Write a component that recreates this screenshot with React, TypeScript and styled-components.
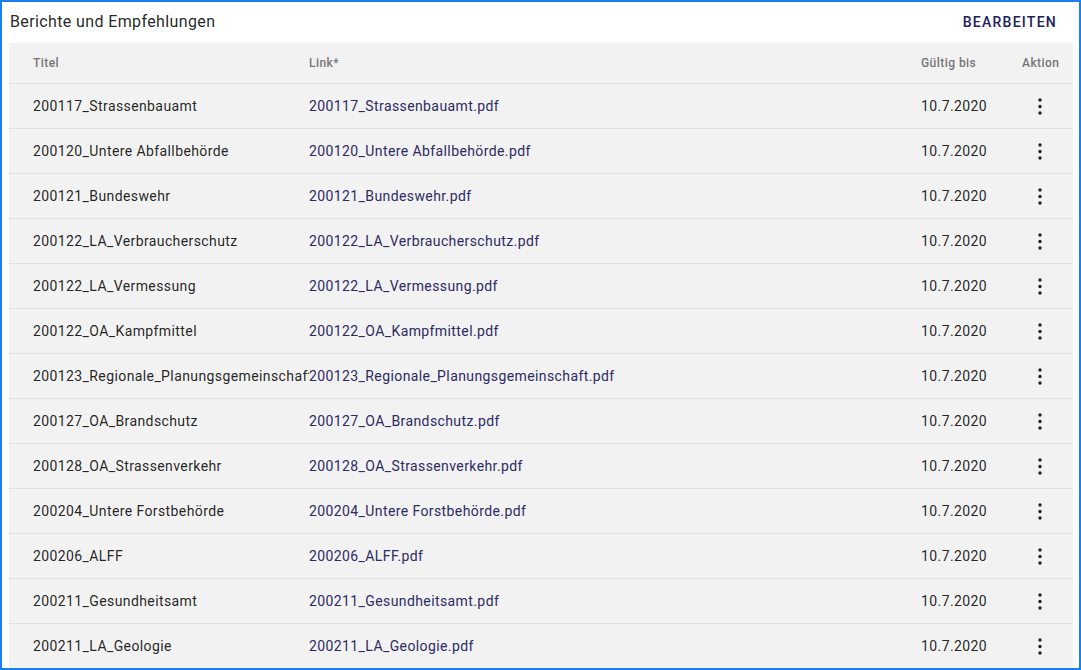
import React, { FC } from 'react'
import styled, { createGlobalStyle } from 'styled-components'

const GlobalStyle = createGlobalStyle`
    html, body {
        margin: 0;
        padding: 0;
        background: #ffffff;
        font-family: Roboto, "Liberation Sans", Arial, sans-serif;
    }
`

interface IReport {
	title: string
	file: string
	validUntil: string
}

const reports: IReport[] = [
	{ title: '200117_Strassenbauamt', file: '200117_Strassenbauamt.pdf', validUntil: '10.7.2020' },
	{ title: '200120_Untere Abfallbehörde', file: '200120_Untere Abfallbehörde.pdf', validUntil: '10.7.2020' },
	{ title: '200121_Bundeswehr', file: '200121_Bundeswehr.pdf', validUntil: '10.7.2020' },
	{ title: '200122_LA_Verbraucherschutz', file: '200122_LA_Verbraucherschutz.pdf', validUntil: '10.7.2020' },
	{ title: '200122_LA_Vermessung', file: '200122_LA_Vermessung.pdf', validUntil: '10.7.2020' },
	{ title: '200122_OA_Kampfmittel', file: '200122_OA_Kampfmittel.pdf', validUntil: '10.7.2020' },
	{ title: '200123_Regionale_Planungsgemeinschaft', file: '200123_Regionale_Planungsgemeinschaft.pdf', validUntil: '10.7.2020' },
	{ title: '200127_OA_Brandschutz', file: '200127_OA_Brandschutz.pdf', validUntil: '10.7.2020' },
	{ title: '200128_OA_Strassenverkehr', file: '200128_OA_Strassenverkehr.pdf', validUntil: '10.7.2020' },
	{ title: '200204_Untere Forstbehörde', file: '200204_Untere Forstbehörde.pdf', validUntil: '10.7.2020' },
	{ title: '200206_ALFF', file: '200206_ALFF.pdf', validUntil: '10.7.2020' },
	{ title: '200211_Gesundheitsamt', file: '200211_Gesundheitsamt.pdf', validUntil: '10.7.2020' },
	{ title: '200211_LA_Geologie', file: '200211_LA_Geologie.pdf', validUntil: '10.7.2020' },
]

const MoreIcon: FC = () => (
	<svg width='24' height='24' viewBox='0 0 24 24' fill='#212121'>
		<circle cx='12' cy='6' r='1.7' />
		<circle cx='12' cy='12.5' r='1.7' />
		<circle cx='12' cy='19' r='1.7' />
	</svg>
)

export default function App() {
	return (
		<>
			<GlobalStyle />
			<Frame>
				<CardHeader>
					<CardTitle>Berichte und Empfehlungen</CardTitle>
					<TextButton>Bearbeiten</TextButton>
				</CardHeader>

				<Table>
					<HeadRow>
						<HeadCell>Titel</HeadCell>
						<HeadCell $flush>Link*</HeadCell>
						<HeadCell $flush>Gültig bis</HeadCell>
						<HeadCell $flush>Aktion</HeadCell>
					</HeadRow>

					{reports.map(r => (
						<Row key={r.title}>
							<Cell>{r.title}</Cell>
							<Cell $flush><FileLink href='#'>{r.file}</FileLink></Cell>
							<Cell $flush>{r.validUntil}</Cell>
							<ActionCell>
								<IconButton aria-label='Aktionen'>
									<MoreIcon />
								</IconButton>
							</ActionCell>
						</Row>
					))}
				</Table>
			</Frame>
		</>
	)
}

const Frame = styled.div`
    box-sizing: border-box;
    width: 1081px;
    height: 670px;
    overflow: hidden;

    border: 2px solid #1a7ff0;
    padding: 0 6px 0 7px;
    background: #ffffff;
`

const CardHeader = styled.div`
    box-sizing: border-box;
    height: 41px;
    display: flex;
    align-items: center;
    justify-content: space-between;
    padding: 0 0 2px 1px;
`

const CardTitle = styled.div`
    font-size: 16px;
    color: rgba(0, 0, 0, 0.87);
    letter-spacing: 0.38px;
`

const TextButton = styled.button`
    border: none;
    background: transparent;
    padding: 0 16px 0 0;

    font-family: inherit;
    font-size: 14px;
    font-weight: 500;
    text-transform: uppercase;
    letter-spacing: 1.25px;
    color: #22205a;
    cursor: pointer;
`

const Table = styled.div`
    background: #f2f2f2;
`

const columns = '300px 612px 101px 1fr'

const HeadRow = styled.div`
    display: grid;
    grid-template-columns: ${columns};
    height: 40px;
    align-items: center;
    border-bottom: 1px solid #e0e0e0;
`

const HeadCell = styled.div<{ $flush?: boolean }>`
    padding-left: ${p => (p.$flush ? '0' : '24px')};
    font-size: 12px;
    font-weight: 500;
    color: #757575;
    letter-spacing: 0.45px;
    white-space: nowrap;
`

const Row = styled.div`
    display: grid;
    grid-template-columns: ${columns};
    height: 44px;
    align-items: center;
    border-bottom: 1px solid #e0e0e0;
`

const Cell = styled.div<{ $flush?: boolean }>`
    padding-left: ${p => (p.$flush ? '0' : '24px')};
    font-size: 14px;
    color: rgba(0, 0, 0, 0.87);
    letter-spacing: 0.4px;
    white-space: nowrap;
    overflow: hidden;
`

const FileLink = styled.a`
    color: #2d2a63;
    text-decoration: none;
`

const ActionCell = styled.div`
    display: flex;
    align-items: center;
    padding-left: 6px;
`

const IconButton = styled.button`
    width: 24px;
    height: 24px;
    padding: 0;
    border: none;
    background: transparent;
    display: flex;
    align-items: center;
    justify-content: center;
    cursor: pointer;
`
